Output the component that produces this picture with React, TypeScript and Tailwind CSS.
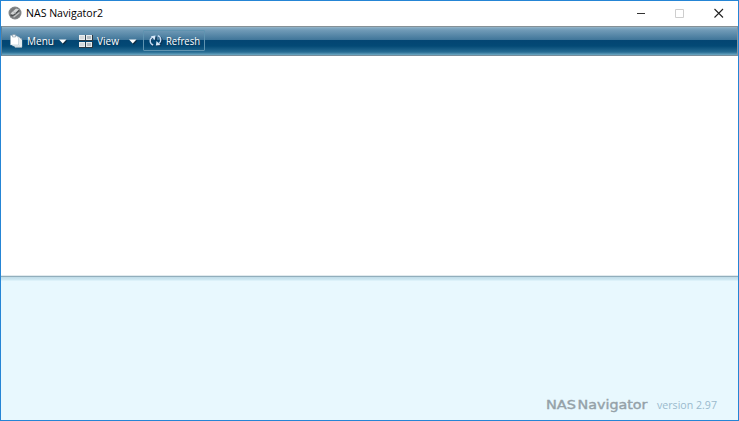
import React from "react";

function AppIcon() {
  return (
    <svg width="14" height="14" viewBox="0 0 14 14" className="shrink-0">
      <circle cx="7" cy="7" r="6.500" fill="#85888a" />
      <circle cx="7" cy="7" r="5.300" fill="#77797b" />
      <path d="M2.500 7.500 8 2.500l3 1L5.500 9z" fill="#d3d5d6" />
      <path d="M2.500 9.500c2 1 4.500-1 8.500-5.200" stroke="#4c4f51" strokeWidth="1.200" fill="none" />
      <path d="M5.500 11.300 11.500 6.500" stroke="#c2c4c5" strokeWidth="1.300" />
      <path d="M5 5.500 8 7.500" stroke="#aaacad" strokeWidth=".7" />
    </svg>
  );
}

function MenuIcon() {
  return (
    <svg width="14" height="14" viewBox="0 0 14 14" className="shrink-0">
      <path d="M5 4h7v10H5z" fill="#7f9bad" />
      <path d="M4.500 3.500h5l2.500 2.500v7H4.500z" fill="#fff" stroke="#8ba4b5" strokeWidth=".5" />
      <path d="M2.500 2.500h5.500l2 2v7.500H2.500z" fill="#fff" stroke="#9fb4c2" strokeWidth=".5" />
      <path d="M.5 1.500h5.500L8.500 4v7h-8z" fill="#fff" stroke="#9fb4c2" strokeWidth=".5" />
      <path d="M2.500 .5h3v2.500h-3z" fill="#e8eef2" stroke="#73899a" strokeWidth=".5" />
    </svg>
  );
}

function ViewIcon() {
  return (
    <svg width="14" height="13" viewBox="0 0 14 13" className="shrink-0">
      <path d="M0 0h6.800v6H0zM7 0h7v6H7zM0 7h6.800v6H0zM7 7h7v6H7z" fill="#2b3841" />
      <path d="M0 0h6v5H0zM7 0h6v5H7zM0 7h6v5H0zM7 7h6v5H7z" fill="#e9eced" />
      <path d="M1 1h4v3H1zM1 8h4v3H1z" fill="#d5dadd" />
      <path d="M8 1h4v3H8zM8 8h4v3H8z" fill="#b5bdc3" />
    </svg>
  );
}

function RefreshIcon() {
  return (
    <svg width="13" height="13" viewBox="0 0 13 13" className="shrink-0 overflow-visible" fill="none">
      <g transform="translate(.8 .9)" stroke="#0c3457" strokeWidth="1.500">
        <path d="M4 10.800C.2 9.500 0 4.800 3.200 3M9.200 1.800c3.800 1.700 3.800 6 .8 8" />
        <path d="M6.200 1.500v4.200M11.500 10.500H7" />
      </g>
      <path d="M4.200 11C.4 9.600.2 5 3.600 3.200M8.800 1.600c3.800 1.500 3.900 6 .8 8" stroke="#c5dbf3" strokeWidth="1.400" />
      <path d="M1.800 2.200 6.500 1.500 5.800 6z" fill="#d9e9f8" />
      <path d="M11.500 10.900 6.900 11.500 7.500 7z" fill="#d9e9f8" />
    </svg>
  );
}

function Caret() {
  return (
    <svg width="8" height="6" viewBox="0 0 8 6" className="shrink-0 overflow-visible">
      <path d="M.7 1.500H8.500L4.700 5.700z" fill="#102c40" />
      <path d="M0 .5h7.500L3.700 4.500z" fill="#fff" />
    </svg>
  );
}

function Label({ children, width }: { children: string; width: number }) {
  return (
    <svg width={width} height="16" className="block shrink-0 overflow-visible">
      <text x="0" y="12" textLength={width} lengthAdjust="spacingAndGlyphs" fill="currentColor" fontSize="11">{children}</text>
    </svg>
  );
}

function TitleBar() {
  return (
    <header className="flex h-[25px] shrink-0 items-start bg-white pt-[5px] pl-[7px] text-black">
      <AppIcon />
      <span className="-mt-px ml-[4px] flex-1"><Label width={77}>NAS Navigator2</Label></span>
      <svg width="104" height="19" viewBox="634 6 104 19" fill="none">
        <path d="M637 13.500h8" stroke="#333" />
        <path d="M675.500 9.500h8v8h-8z" stroke="#cecece" />
        <path d="m714.500 9 8.500 8.500m0-8.500-8.500 8.500" stroke="#222" strokeWidth="1.100" />
      </svg>
    </header>
  );
}

function Toolbar() {
  return (
    <nav className="flex h-[30px] shrink-0 items-center border border-t-[#859096] border-r-[#8b969d] border-b-[#778d9b] border-l-[#5f8197] bg-[linear-gradient(to_bottom,#9bb7c8_0px,#82a9c2_1px,#719bb7_3px,#3f7599_13px,#034572_13px,#034975_19px,#276c93_25px,#70a9c3_28px)] bg-origin-padding pb-px pl-[8px] text-white [text-shadow:1px_1px_1px_#123a56]">
      <MenuIcon />
      <span className="mt-px ml-[3px]"><Label width={27}>Menu</Label></span>
      <span className="mt-[2px] ml-[5px]"><Caret /></span>
      <span className="mt-[2px] ml-[12px] flex"><ViewIcon /></span>
      <span className="mt-px ml-[4px]"><Label width={22}>View</Label></span>
      <span className="mt-[2px] ml-[10px]"><Caret /></span>
      <button className="ml-[6px] flex h-[21px] w-[62px] items-center rounded-[1px] border border-[#5f93b0] pl-[5px] [text-shadow:1px_1px_1px_#123a56]">
        <RefreshIcon />
        <span className="ml-[4px]"><Label width={34}>Refresh</Label></span>
      </button>
    </nav>
  );
}

export default function App() {
  return (
    <div className="flex h-[421px] w-[739px] flex-col overflow-hidden border border-[#2585d5] bg-white font-['Open_Sans','Noto_Sans',sans-serif]">
      <TitleBar />
      <Toolbar />
      <main className="h-[219px] shrink-0 bg-white" />
      <footer className="flex flex-1 items-end bg-[linear-gradient(to_bottom,#e1eaee_0px,#e1eaee_1px,#91aebc_1px,#91aebc_2px,#bfdbe7_2px,#d0eaf4_5px,#e8f8fe_6px)] pb-[7px] pl-[545px]">
        <svg width="111" height="18" className="block shrink-0" fill="#94a1a8" stroke="#94a1a8" strokeWidth=".4" fontFamily="DejaVu Sans, sans-serif" fontSize="13">
          <text x="0" y="14" textLength="30" lengthAdjust="spacingAndGlyphs">NAS</text>
          <text x="31.500" y="14" textLength="70" lengthAdjust="spacingAndGlyphs">Navigator</text>
        </svg>
        <span className="text-[#9abacd]"><Label width={60}>version 2.97</Label></span>
      </footer>
    </div>
  );
}
